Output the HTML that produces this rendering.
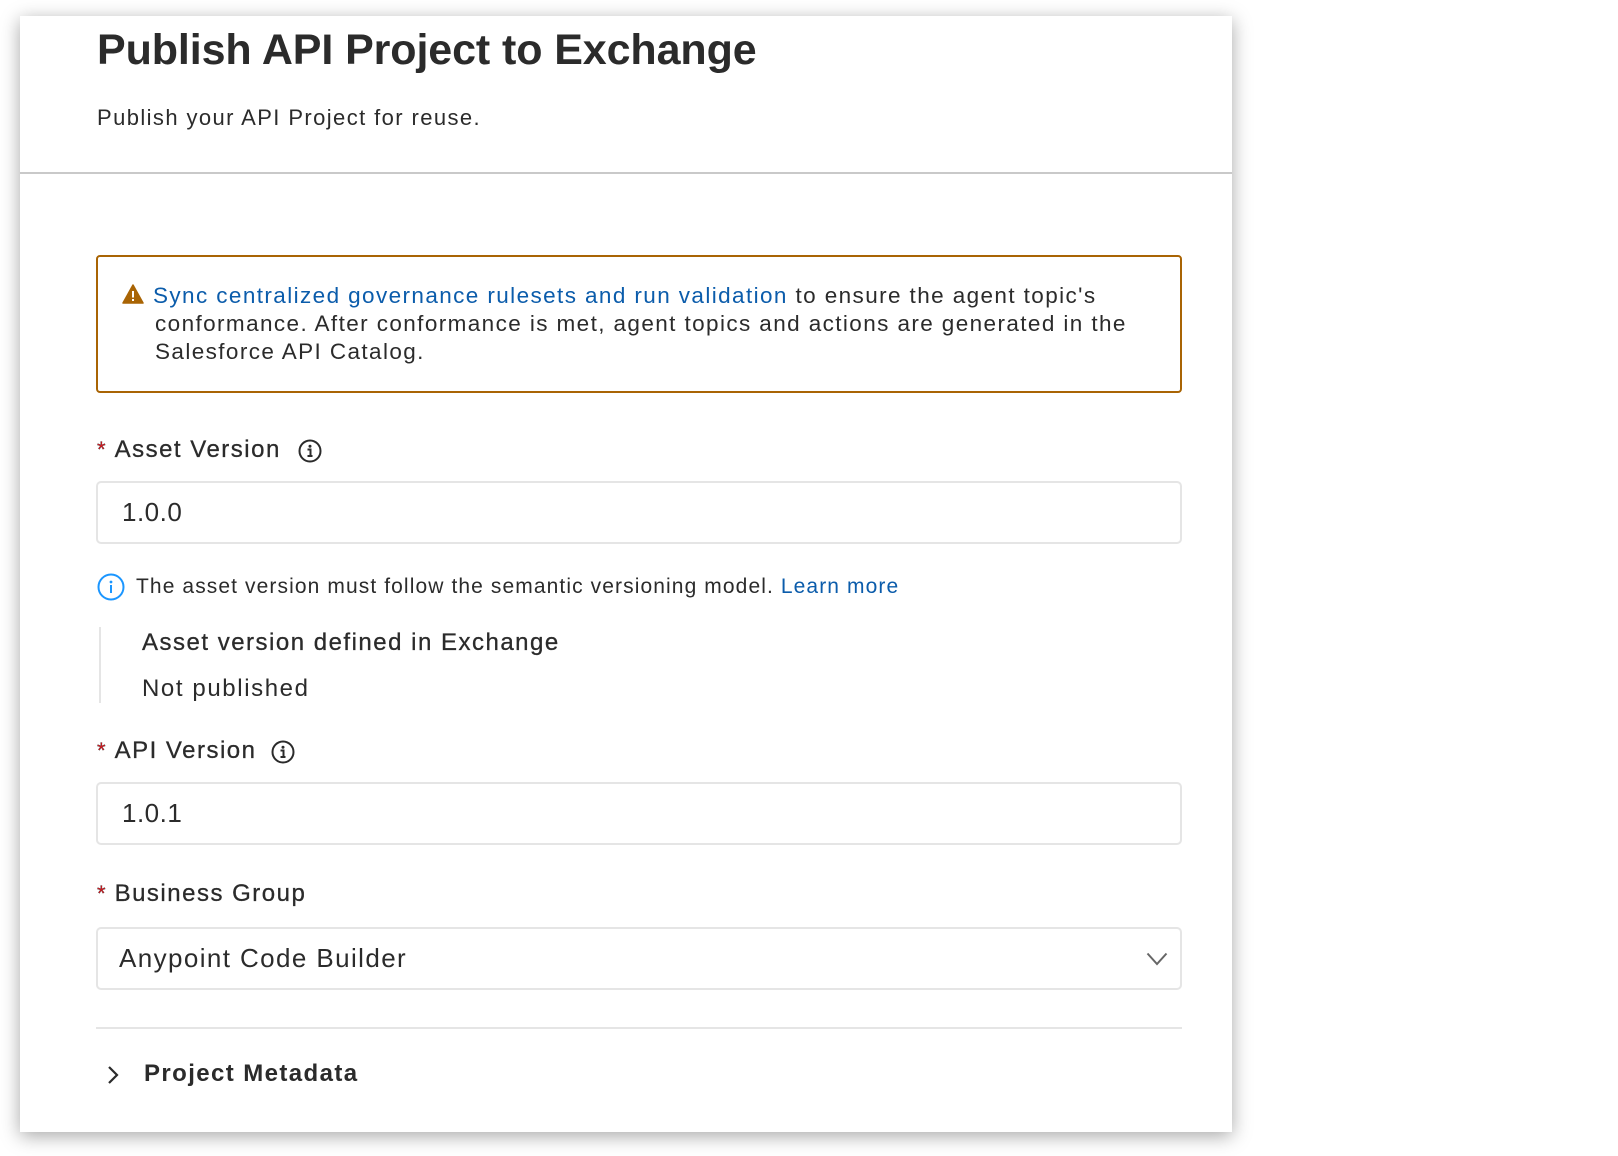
<!DOCTYPE html>
<html><head><meta charset="utf-8"><style>
*{margin:0;padding:0;box-sizing:border-box}
body{width:1618px;height:1156px;background:#fff;font-family:"Liberation Sans",sans-serif;color:#2b2b2b;position:relative;overflow:hidden}
.panel{position:absolute;left:20px;top:16px;width:1212px;height:1116px;background:#fff;box-shadow:0 4px 18px rgba(0,0,0,.35)}
.a{position:absolute;white-space:nowrap}
.box{position:absolute;left:96px;border:2px solid #e5e5e5;border-radius:5px;background:#fff}
.star{color:#e0141c;font-size:22px;letter-spacing:0;margin-right:9px}
.lbl{font-size:24px;letter-spacing:1.5px;-webkit-text-stroke:0.3px #2b2b2b}
</style></head><body>
<div class="panel"></div>
<div class="a" style="left:97px;top:26px;font-size:43px;font-weight:bold;letter-spacing:-0.1px">Publish API Project to Exchange</div>
<div class="a" style="left:97px;top:105px;font-size:22px;letter-spacing:1.4px">Publish your API Project for reuse.</div>
<div class="a" style="left:20px;top:172px;width:1212px;height:2px;background:#c9c9c9"></div>

<div class="a" style="left:96px;top:255px;width:1086px;height:138px;border:2px solid #a96404;border-radius:4px"></div>
<svg class="a" style="left:122px;top:284px" width="22" height="20" viewBox="0 0 22 20"><path d="M11 1L21 19H1Z" fill="#a96404" stroke="#a96404" stroke-linejoin="round" stroke-width="1.5"/><rect x="10" y="7" width="2" height="6.5" fill="#fff"/><rect x="10" y="15" width="2" height="2" fill="#fff"/></svg>
<div class="a" style="left:153px;top:282px;font-size:22.5px;line-height:28px;letter-spacing:1.4px"><span style="color:#0b5cab">Sync centralized governance rulesets and run validation</span> to ensure the agent topic's</div>
<div class="a" style="left:155px;top:310px;font-size:22.5px;line-height:28px;letter-spacing:1.4px">conformance. After conformance is met, agent topics and actions are generated in the<br>Salesforce API Catalog.</div>

<div class="a lbl" style="left:97px;top:436px"><span class="star">*</span>Asset Version</div>
<svg class="a" style="left:298px;top:439px" width="24" height="24" viewBox="0 0 24 24"><circle cx="12" cy="12" r="10.5" fill="none" stroke="#2b2b2b" stroke-width="2"/><circle cx="12" cy="7.3" r="1.5" fill="#2b2b2b"/><path d="M9.5 10.5h3v6.5M9.5 17h5" stroke="#2b2b2b" stroke-width="2" fill="none"/></svg>
<div class="box" style="top:481px;width:1086px;height:63px"></div>
<div class="a" style="left:122px;top:497px;font-size:26px;letter-spacing:0.5px">1.0.0</div>

<svg class="a" style="left:97px;top:573px" width="28" height="28" viewBox="0 0 28 28"><circle cx="14" cy="14" r="12.5" fill="none" stroke="#1b96ff" stroke-width="2"/><circle cx="14" cy="9" r="1.4" fill="#1b96ff"/><rect x="13" y="12" width="2" height="8" fill="#1b96ff"/></svg>
<div class="a" style="left:136px;top:575px;font-size:21px;letter-spacing:1.1px">The asset version must follow the semantic versioning model. <span style="color:#0b5cab">Learn more</span></div>
<div class="a" style="left:99px;top:627px;width:2px;height:76px;background:#e5e5e5"></div>
<div class="a lbl" style="left:142px;top:629px">Asset version defined in Exchange</div>
<div class="a" style="left:142px;top:675px;font-size:24px;letter-spacing:1.6px">Not published</div>

<div class="a lbl" style="left:97px;top:737px"><span class="star">*</span>API Version</div>
<svg class="a" style="left:271px;top:740px" width="24" height="24" viewBox="0 0 24 24"><circle cx="12" cy="12" r="10.5" fill="none" stroke="#2b2b2b" stroke-width="2"/><circle cx="12" cy="7.3" r="1.5" fill="#2b2b2b"/><path d="M9.5 10.5h3v6.5M9.5 17h5" stroke="#2b2b2b" stroke-width="2" fill="none"/></svg>
<div class="box" style="top:782px;width:1086px;height:63px"></div>
<div class="a" style="left:122px;top:798px;font-size:26px;letter-spacing:0.5px">1.0.1</div>

<div class="a lbl" style="left:97px;top:880px"><span class="star">*</span>Business Group</div>
<div class="box" style="top:927px;width:1086px;height:63px"></div>
<div class="a" style="left:119px;top:943px;font-size:26px;letter-spacing:1.4px">Anypoint Code Builder</div>
<svg class="a" style="left:1146px;top:952px" width="22" height="14" viewBox="0 0 22 14"><path d="M1.5 1.5L11 12 20.5 1.5" fill="none" stroke="#666" stroke-width="2"/></svg>

<div class="a" style="left:96px;top:1027px;width:1086px;height:2px;background:#e5e5e5"></div>
<svg class="a" style="left:106px;top:1065px" width="14" height="20" viewBox="0 0 14 20"><path d="M3 2l8 8-8 8" fill="none" stroke="#2b2b2b" stroke-width="2.2"/></svg>
<div class="a" style="left:144px;top:1060px;font-size:24px;font-weight:bold;letter-spacing:1.4px">Project Metadata</div>
</body></html>
